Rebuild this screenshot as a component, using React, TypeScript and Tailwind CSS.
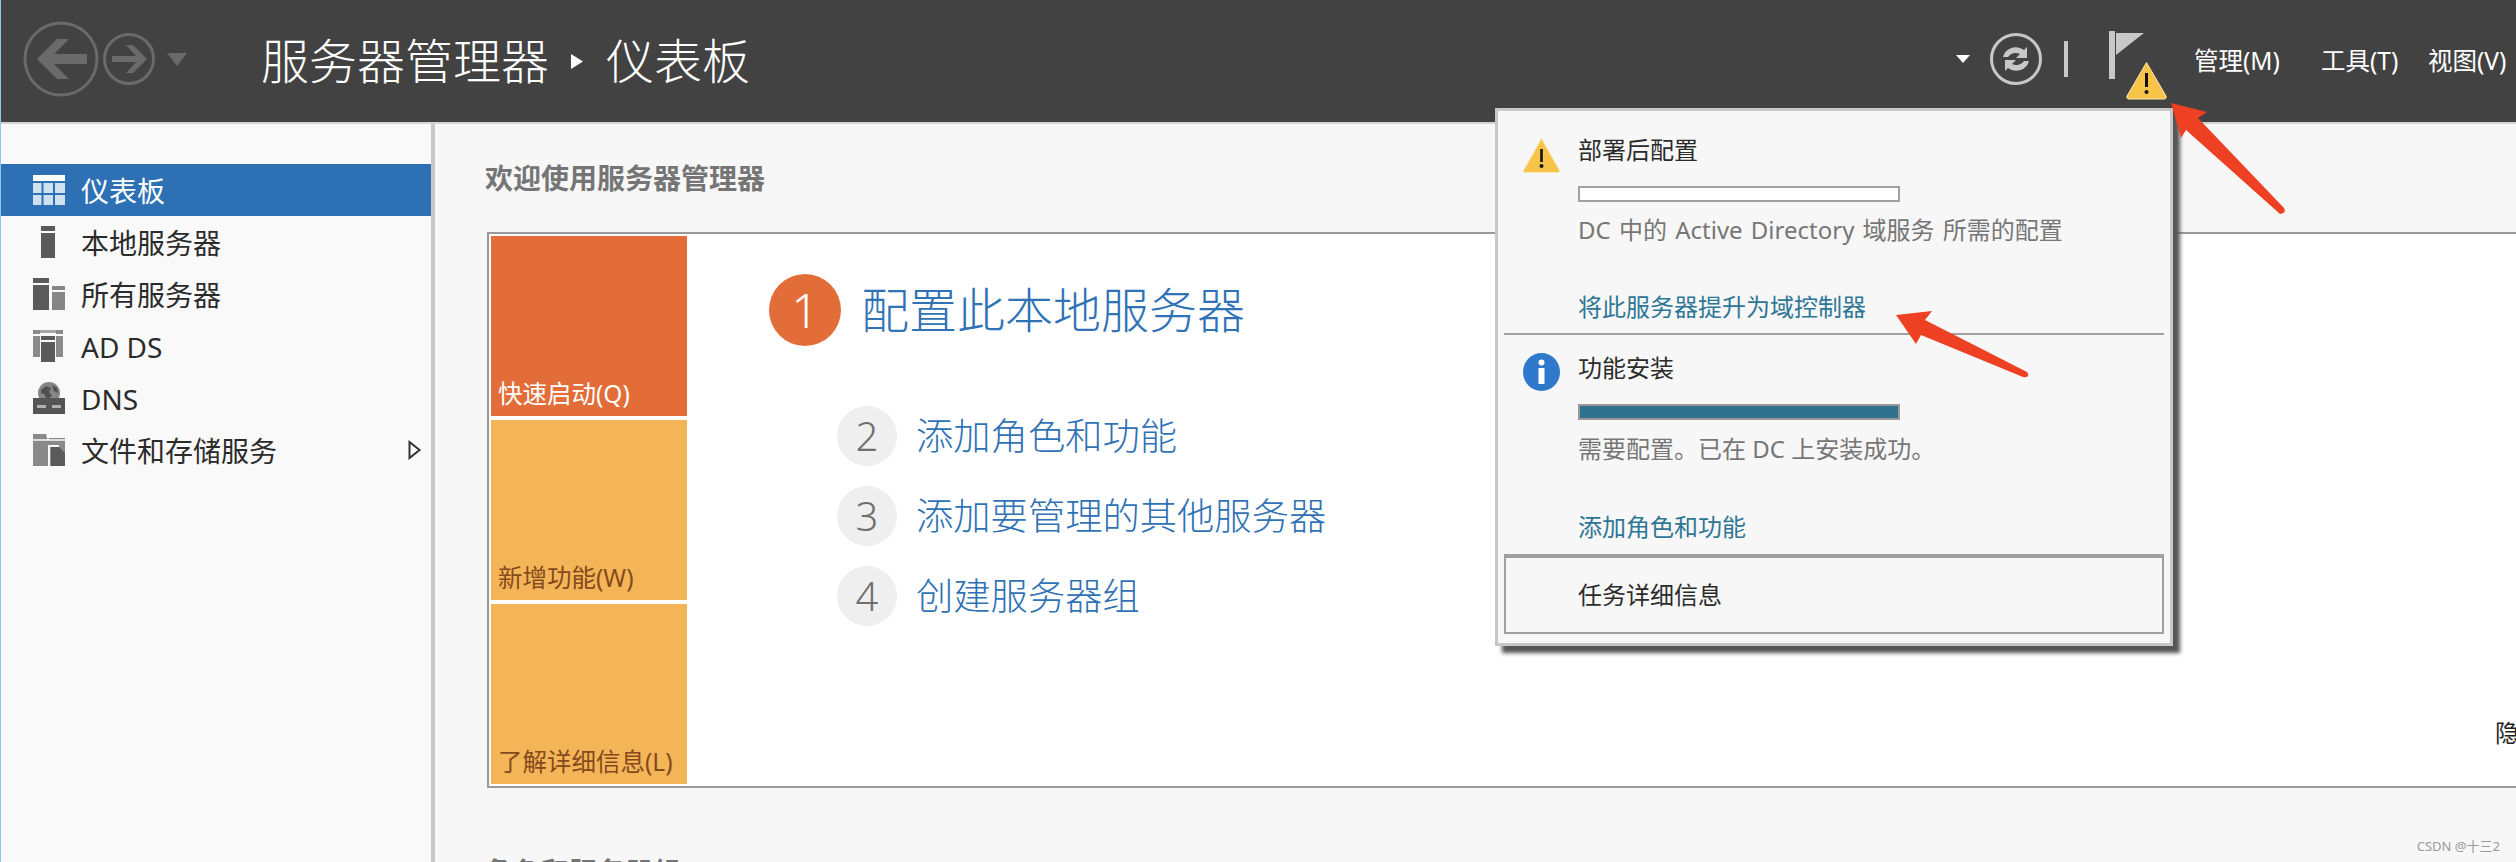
const navItems = [
  { label: '仪表板', icon: 'dashboard', active: true },
  { label: '本地服务器', icon: 'local' },
  { label: '所有服务器', icon: 'all' },
  { label: 'AD DS', icon: 'adds' },
  { label: 'DNS', icon: 'dns' },
  { label: '文件和存储服务', icon: 'files', more: true },
];

const tiles = [
  { label: '快速启动(Q)', className: 'bg-[#e26d38] text-white' },
  { label: '新增功能(W)', className: 'bg-[#f4b558] text-[#854a1c]' },
  { label: '了解详细信息(L)', className: 'bg-[#f4b558] text-[#854a1c]' },
];

const steps = [
  { n: 2, label: '添加角色和功能' },
  { n: 3, label: '添加要管理的其他服务器' },
  { n: 4, label: '创建服务器组' },
];

function NavIcon({ name }: { name: string }) {
  if (name === 'dashboard') {
    return (
      <svg width="32" height="30" viewBox="0 0 32 30" className="block">
        <rect width="32" height="6" fill="#fff" />
        <rect y="8" width="8.5" height="10" fill="#cfe0ee" />
        <rect x="10.5" y="8" width="9.5" height="10" fill="#cfe0ee" />
        <rect x="22" y="8" width="10" height="10" fill="#cfe0ee" />
        <rect y="20" width="8.5" height="10" fill="#cfe0ee" />
        <rect x="10.5" y="20" width="9.5" height="10" fill="#cfe0ee" />
        <rect x="22" y="20" width="10" height="10" fill="#cfe0ee" />
      </svg>
    );
  }
  if (name === 'local') {
    return (
      <svg width="32" height="32" viewBox="0 0 32 32" className="block">
        <rect x="8" width="14" height="5" fill="#5a5a5a" />
        <rect x="8" y="7" width="14" height="25" fill="#5a5a5a" />
      </svg>
    );
  }
  if (name === 'all') {
    return (
      <svg width="32" height="32" viewBox="0 0 32 32" className="block">
        <rect width="16" height="5" fill="#5a5a5a" />
        <rect y="7" width="16" height="25" fill="#5a5a5a" />
        <rect x="19" y="8" width="13" height="4" fill="#868686" />
        <rect x="19" y="14" width="13" height="18" fill="#868686" />
      </svg>
    );
  }
  if (name === 'adds') {
    return (
      <svg width="32" height="32" viewBox="0 0 32 32" className="block">
        <rect width="7" height="4" fill="#8a8a8a" />
        <rect y="6" width="7" height="21" fill="#8a8a8a" />
        <rect x="23" width="7" height="4" fill="#8a8a8a" />
        <rect x="23" y="6" width="7" height="21" fill="#8a8a8a" />
        <rect x="7" width="16" height="3" fill="#a8a8a8" />
        <rect x="8" y="6" width="14" height="4" fill="#5a5a5a" />
        <rect x="8" y="12" width="14" height="20" fill="#5a5a5a" />
      </svg>
    );
  }
  if (name === 'dns') {
    return (
      <svg width="32" height="32" viewBox="0 0 32 32" className="block">
        <circle cx="16" cy="11" r="11" fill="#868686" />
        <path d="M8 8l5-4 5 2-2 4 3 4-5 3-3-5-3-1zM19 3l5 3 1 5-4-2z" fill="#4f4f4f" />
        <rect y="16" width="32" height="16" fill="#555" />
        <rect x="4" y="23" width="9" height="3" fill="#b0b0b0" />
        <rect x="19" y="23" width="9" height="3" fill="#b0b0b0" />
      </svg>
    );
  }
  return (
    <svg width="32" height="32" viewBox="0 0 32 32" className="block">
      <path d="M0 0h13l1 4h18v28H0z" fill="#8a8a8a" />
      <path d="M0 6h14l1-1v1H32" stroke="#f9f9f9" strokeWidth="1.5" fill="none" />
      <path d="M18 13h8l6 6v13H18z" fill="#5a5a5a" />
      <path d="M16 32V12h10" stroke="#f9f9f9" strokeWidth="2" fill="none" />
    </svg>
  );
}

function WarnIcon() {
  return (
    <svg width="37" height="35" viewBox="0 0 37 35" className="block">
      <path d="M18.5 0.5L36.5 32.5a1.5 1.5 0 0 1-1.3 2H1.8a1.5 1.5 0 0 1-1.3-2z" fill="#f8c349" stroke="#fbe7b4" strokeWidth="1" />
      <rect x="17.2" y="11" width="2.6" height="13" fill="#111" />
      <circle cx="18.5" cy="28" r="2" fill="#111" />
    </svg>
  );
}

function Step({ n, label }: { n: number; label: string }) {
  return (
    <div className="flex items-center ml-[150px] h-[60px]">
      <div className="w-[60px] h-[60px] rounded-full bg-[#efefef] flex items-center justify-center text-[40px] leading-none font-light text-[#6f6f6f]">
        {n}
      </div>
      <span className="ml-[19px] text-[37.3px] leading-[48px] font-light text-[#2f72b5]">{label}</span>
    </div>
  );
}

export default function App() {
  return (
    <div className="relative w-[2516px] h-[862px] overflow-hidden bg-[#f7f7f7] border-l border-[#8ac8ee] [font-family:'Noto_Sans','Noto_Sans_CJK_SC',sans-serif]">
      {/* top bar */}
      <header className="flex items-center h-[124px] pb-[4px] pl-[22px] bg-[#424242] border-b-2 border-[#d4d4d4]">
        <svg width="76" height="76" viewBox="0 0 76 76" className="block shrink-0">
          <circle cx="38" cy="38" r="36" fill="none" stroke="#6a6a6a" strokeWidth="3" />
          <path d="M14 38L34 18h12L31 33h33v10H31l15 15H34z" fill="#6a6a6a" />
        </svg>
        <svg width="52" height="52" viewBox="0 0 52 52" className="block shrink-0 ml-[4px]">
          <circle cx="26" cy="26" r="24.5" fill="none" stroke="#6a6a6a" strokeWidth="3" />
          <path d="M44 26L30 12h-7l10 11H9v6h24L23 40h7z" fill="#6a6a6a" />
        </svg>
        <svg width="20" height="13" viewBox="0 0 20 13" className="block shrink-0 ml-[12px]">
          <path d="M0 0h20L10 13z" fill="#6a6a6a" />
        </svg>
        <span className="ml-[74px] mt-[4px] text-[48px] leading-[60px] font-light text-white">服务器管理器</span>
        <svg width="12" height="15" viewBox="0 0 12 15" className="block shrink-0 ml-[22px] mt-[4px]">
          <path d="M0 0l12 7.5L0 15z" fill="#fff" />
        </svg>
        <span className="ml-[23px] mt-[4px] text-[48px] leading-[60px] font-light text-white">仪表板</span>

        <div className="ml-auto flex items-center">
          <svg width="14" height="8" viewBox="0 0 14 8" className="block">
            <path d="M0 0h14L7 8z" fill="#fff" />
          </svg>
          <svg width="52" height="52" viewBox="0 0 52 52" className="block ml-[20px]">
            <circle cx="26" cy="26" r="24.5" fill="none" stroke="#c8c8c8" strokeWidth="3" />
            <path d="M13 24a13 12 0 0 1 21-7l3-3v11H26l4-4a8.500 7.500 0 0 0-12 3z" fill="#c8c8c8" />
            <path d="M39 28a13 12 0 0 1-21 7l-3 3V27h11l-4 4a8.500 7.500 0 0 0 12-3z" fill="#c8c8c8" />
          </svg>
          <div className="w-[4px] h-[36px] bg-[#c8c8c8] ml-[22px]" />
          <svg width="58" height="69" viewBox="0 0 58 69" className="block ml-[41px] mt-[12px]">
            <rect width="6" height="48" fill="#c8c8c8" />
            <rect x="6" y="2" width="1" height="20" fill="#424242" />
            <path d="M7 2h28L7 24z" fill="#c8c8c8" />
            <path d="M37.5 31.5L57 65a2 2 0 0 1-1.7 3H19.7a2 2 0 0 1-1.7-3z" fill="#f8c349" stroke="#fbe7b4" strokeWidth="1" />
            <rect x="36" y="42" width="3" height="14" fill="#111" />
            <circle cx="37.5" cy="61" r="2" fill="#111" />
          </svg>
          <nav className="flex ml-[27px] mt-[3px] text-[24.5px] leading-[32px] text-white">
            <span className="w-[127px]">管理(M)</span>
            <span className="w-[107px]">工具(T)</span>
            <span className="w-[88px]">视图(V)</span>
          </nav>
        </div>
      </header>

      <div className="flex h-[738px]">
        {/* left nav */}
        <aside className="w-[430px] shrink-0 pt-[40px] bg-[#f9f9f9]">
          {navItems.map((item) => (
            <div
              key={item.label}
              className={`flex items-center h-[52px] pl-[32px] text-[28px] leading-[36px] ${
                item.active ? 'bg-[#2d71b4] text-white' : 'text-[#2b2b2b]'
              }`}
            >
              <NavIcon name={item.icon} />
              <span className="ml-[16px] mt-[2px]">{item.label}</span>
              {item.more && (
                <svg width="14" height="20" viewBox="0 0 14 20" className="block ml-auto mr-[9px]">
                  <path d="M1.5 2l10 8-10 8z" fill="#fff" stroke="#333" strokeWidth="2" />
                </svg>
              )}
            </div>
          ))}
        </aside>
        <div className="w-[4px] shrink-0 bg-[#c8c8c8]" />

        {/* main area */}
        <main className="flex-1 min-w-0 pt-[34px] pl-[50px]">
          <h2 className="text-[28px] leading-[40px] font-bold text-[#757575]">欢迎使用服务器管理器</h2>
          <section className="flex w-[2060px] h-[556px] mt-[34px] ml-[2px] p-[2px] bg-white border-2 border-[#999]">
            <div className="w-[196px] shrink-0 flex flex-col gap-[4px]">
              {tiles.map((t) => (
                <div key={t.label} className={`flex-1 flex items-end px-[7px] pb-[6px] text-[24.5px] leading-[32px] ${t.className}`}>
                  {t.label}
                </div>
              ))}
            </div>
            <div className="flex-1 pt-[38px]">
              <div className="flex items-center ml-[82px] h-[72px]">
                <div className="w-[72px] h-[72px] rounded-full bg-[#e26d38] flex items-center justify-center text-[48px] leading-none font-light text-white">
                  1
                </div>
                <span className="ml-[20px] text-[48px] leading-[60px] font-light text-[#2f72b5]">配置此本地服务器</span>
              </div>
              <div className="flex flex-col gap-[20px] mt-[60px]">
                {steps.map((s) => (
                  <Step key={s.n} n={s.n} label={s.label} />
                ))}
              </div>
            </div>
            <div className="w-[48px] shrink-0 flex items-end pb-[35px] text-[24px] leading-[32px] text-[#222]">隐藏</div>
          </section>
          <h2 className="mt-[64px] text-[28px] leading-[40px] font-bold text-[#757575]">角色和服务器组</h2>
        </main>
      </div>

      {/* notifications flyout */}
      <div className="absolute left-[1494px] top-[108px] w-[678px] h-[538px] bg-[#f7f7f7] border-[3px] border-[#c8c8c8] shadow-[7px_7px_4px_#555] px-[6px] pt-[20px]">
        <div className="flex pl-[19px] h-[204px] border-b-2 border-[#a0a0a0]">
          <div className="shrink-0 w-[37px] mt-[7px]">
            <WarnIcon />
          </div>
          <div className="ml-[18px] flex-1">
            <div className="text-[24px] leading-[32px] text-[#2b2b2b] mt-[3px]">部署后配置</div>
            <div className="w-[322px] h-[16px] mt-[20px] bg-white border-2 border-[#a0a0a0]" />
            <div className="mt-[12px] text-[24px] leading-[32px] text-[#767676] [word-spacing:2px]">DC 中的 Active Directory 域服务 所需的配置</div>
            <div className="mt-[45px] text-[24px] leading-[32px] text-[#2e7696]">将此服务器提升为域控制器</div>
          </div>
        </div>
        <div className="flex pl-[19px] h-[219px] pt-[18px]">
          <svg width="37" height="38" viewBox="0 0 37 38" className="block shrink-0">
            <ellipse cx="18.5" cy="19" rx="18.5" ry="19" fill="#2f79cc" />
            <circle cx="18.5" cy="9.5" r="3" fill="#fff" />
            <rect x="15.5" y="15" width="6" height="16" fill="#fff" />
          </svg>
          <div className="ml-[18px] flex-1">
            <div className="text-[24px] leading-[32px] text-[#2b2b2b] -mt-[1px]">功能安装</div>
            <div className="w-[322px] h-[16px] mt-[20px] bg-[#2e7290] border-2 border-[#999]" />
            <div className="mt-[13px] text-[24px] leading-[32px] text-[#767676]">需要配置。已在 DC 上安装成功。</div>
            <div className="mt-[46px] text-[24px] leading-[32px] text-[#2e7696]">添加角色和功能</div>
          </div>
        </div>
        <div className="h-[80px] flex items-center pl-[72px] border-2 border-t-4 border-[#a0a0a0] text-[24px] leading-[32px] text-[#2b2b2b]">
          任务详细信息
        </div>
      </div>

      {/* red annotation arrows */}
      <svg width="2516" height="862" viewBox="0 0 2516 862" className="absolute left-0 top-0 pointer-events-none">
        <path d="M2170 103L2206 112L2197 118L2283 208Q2286 213 2279 214L2185 130L2180 138z" fill="#ee4023" />
        <path d="M1895 315L1931 311L1924 320L2026 372Q2030 378 2022 377L1920 335L1915 344z" fill="#ee4023" />
      </svg>

      <span className="absolute right-[16px] bottom-[8px] text-[13px] leading-[16px] text-[#999]">CSDN @十三2</span>
    </div>
  );
}
